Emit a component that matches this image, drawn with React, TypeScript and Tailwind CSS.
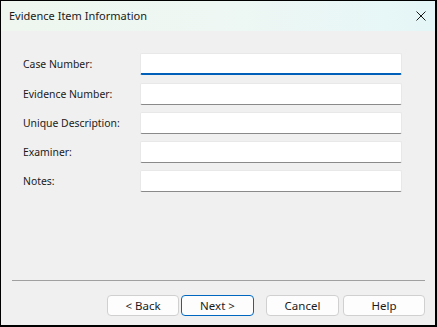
import React from "react";

const font = { fontFamily: '"Noto Sans", "Segoe UI", sans-serif' };

function Field({ label, focused }: { label: string; focused?: boolean }) {
  return (
    <div className="flex h-[22px] items-center">
      <div className="w-[139px] shrink-0 whitespace-nowrap pl-[22px] text-[10.4px] text-[#1a1a1a] leading-none">{label}</div>
      <div
        className={
          "h-[22px] w-[262px] shrink-0 bg-white border border-[#e8e8e8] rounded-[2px] " +
          (focused ? "border-b-2 border-b-[#005fb8]" : "border-b border-b-[#8a8a8a]")
        }
      />
    </div>
  );
}

function Btn({ label, primary, w }: { label: string; primary?: boolean; w: string }) {
  return (
    <div
      className={
        "h-[21px] flex items-center justify-center rounded-[4px] bg-[#fdfdfd] text-[11.5px] text-[#1a1a1a] leading-none " +
        w +
        " " +
        (primary ? "border border-[#0067c0]" : "border border-[#d0d0d0]")
      }
    >
      {label}
    </div>
  );
}

export default function App() {
  return (
    <div
      style={font}
      className="w-[437px] h-[327px] flex flex-col border-l border-t border-r-2 border-b-2 border-black bg-[#f0f0f0] overflow-hidden"
    >
      <div className="h-[30px] flex items-center justify-between bg-gradient-to-r from-[#eef6ef] via-[#eef7f3] to-[#e5f6f8]">
        <span className="pl-[8px] text-[11px] text-[#1a1a1a]">Evidence Item Information</span>
        <svg width="10" height="10" viewBox="0 0 10 10" className="mr-[9px]">
          <path d="M0.5 0.5 L9.5 9.5 M9.5 0.5 L0.5 9.5" stroke="#1a1a1a" strokeWidth="1" />
        </svg>
      </div>
      <div className="flex-1 flex flex-col">
        <div className="pt-[22px] flex flex-col gap-[7px]">
          <div className="mb-[1px]">
            <Field label="Case Number:" focused />
          </div>
          <Field label="Evidence Number:" />
          <Field label="Unique Description:" />
          <Field label="Examiner:" />
          <Field label="Notes:" />
        </div>
        <div className="flex-1" />
        <div className="ml-[11px] w-[413px] h-px bg-[#a0a0a0]" />
        <div className="flex mt-[14px] mb-[9px] pl-[106px]">
          <Btn label="< Back" w="w-[72px]" />
          <div className="w-[2px]" />
          <Btn label="Next >" primary w="w-[73px]" />
          <div className="w-[12px]" />
          <Btn label="Cancel" w="w-[73px]" />
          <div className="w-[4px]" />
          <Btn label="Help" w="w-[82px]" />
        </div>
      </div>
    </div>
  );
}
